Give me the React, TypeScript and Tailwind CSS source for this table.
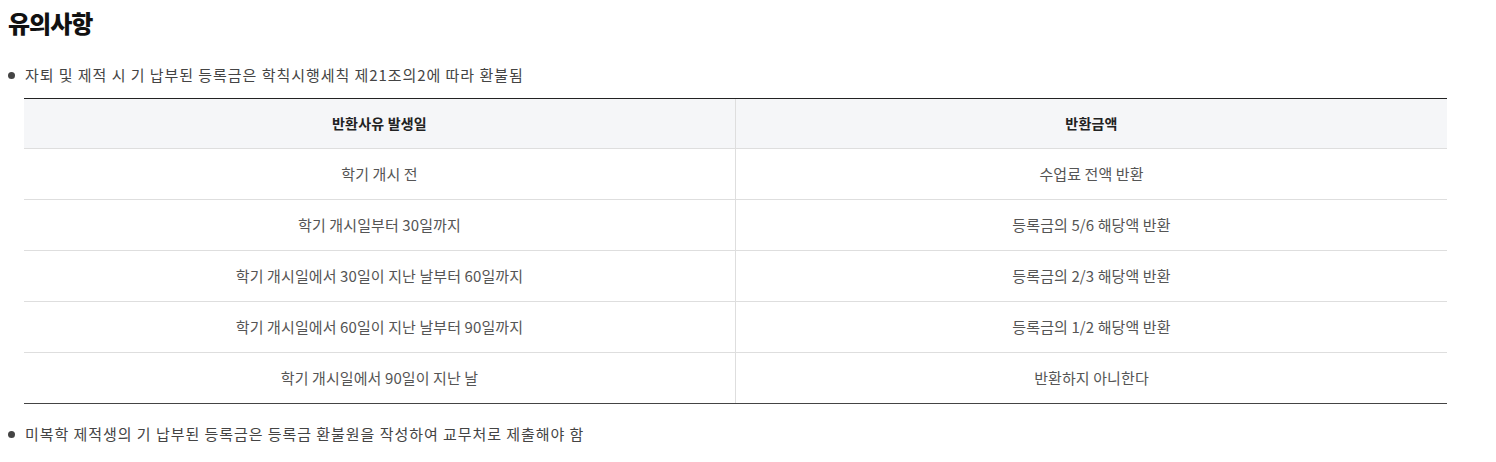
import React from "react";

const rows = [
  ["학기 개시 전", "수업료 전액 반환"],
  ["학기 개시일부터 30일까지", "등록금의 5/6 해당액 반환"],
  ["학기 개시일에서 30일이 지난 날부터 60일까지", "등록금의 2/3 해당액 반환"],
  ["학기 개시일에서 60일이 지난 날부터 90일까지", "등록금의 1/2 해당액 반환"],
  ["학기 개시일에서 90일이 지난 날", "반환하지 아니한다"],
];

export default function App() {
  return (
    <div
      className="w-[1496px] h-[462px] bg-white pl-[8px] pt-[6px]"
      style={{ fontFamily: '"Noto Sans CJK KR", "Noto Sans", sans-serif' }}
    >
      <h2 className="text-[24px] leading-[34px] font-black text-[#111] tracking-[-1px]">유의사항</h2>
      <div className="mt-[24px] flex items-center h-[22px] text-[15px] tracking-[0.95px] text-[#444]">
        <span className="w-[7px] h-[7px] rounded-full bg-[#444] mr-[10px]" />
        <span>자퇴 및 제적 시 기 납부된 등록금은 학칙시행세칙 제21조의2에 따라 환불됨</span>
      </div>
      <div className="ml-[16px] mt-[12px] w-[1423px] border-t border-[#222] border-b border-b-[#444]">
        <div className="grid grid-cols-[712px_1fr] h-[50px] bg-[#f5f6f8] border-b border-[#dedede]">
          <div className="flex items-center justify-center text-[14px] tracking-[0.2px] font-bold text-[#222] border-r border-[#dedede]">
            반환사유 발생일
          </div>
          <div className="flex items-center justify-center text-[14px] tracking-[0.2px] font-bold text-[#222]">반환금액</div>
        </div>
        {rows.map((r, i) => (
          <div
            key={i}
            className={`grid grid-cols-[712px_1fr] text-[15px] tracking-[0.1px] text-[#555] ${
              i < rows.length - 1 ? "h-[51px] border-b border-[#dedede]" : "h-[50px]"
            }`}
          >
            <div className="flex items-center justify-center border-r border-[#dedede]">{r[0]}</div>
            <div className="flex items-center justify-center">{r[1]}</div>
          </div>
        ))}
      </div>
      <div className="mt-[19px] flex items-center h-[22px] text-[15px] tracking-[0.95px] text-[#444]">
        <span className="w-[7px] h-[7px] rounded-full bg-[#444] mr-[10px]" />
        <span>미복학 제적생의 기 납부된 등록금은 등록금 환불원을 작성하여 교무처로 제출해야 함</span>
      </div>
    </div>
  );
}
